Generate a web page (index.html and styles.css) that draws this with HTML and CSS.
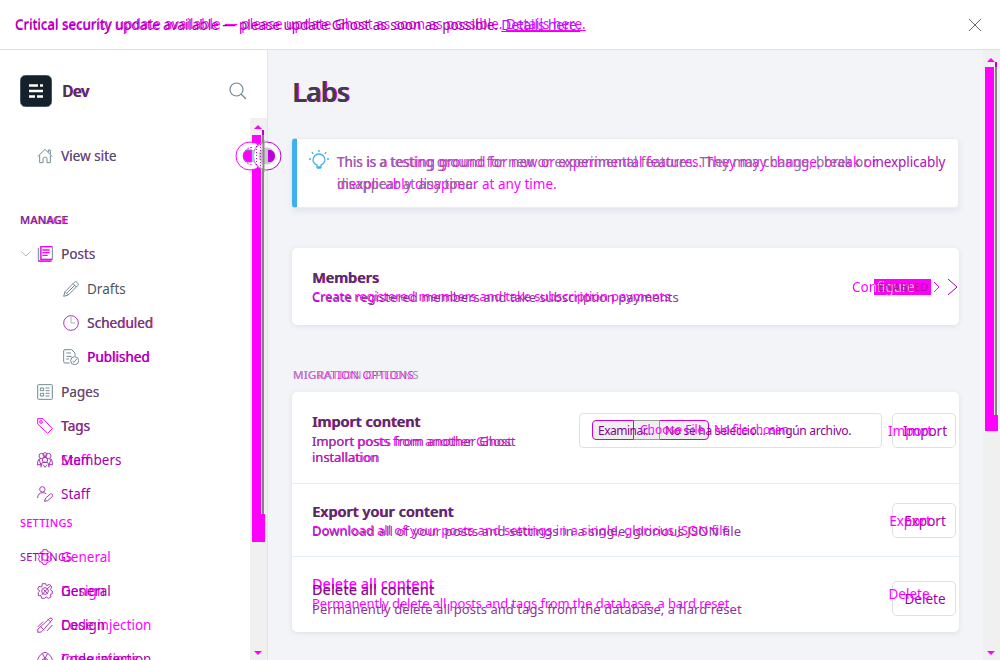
FILE: index.html
```html
<!DOCTYPE html>
<html lang="en">
<head>
<meta charset="utf-8">
<title>Labs</title>
<link rel="stylesheet" href="styles.css">
</head>
<body>
<div class="app">
  <header class="banner">
    <span class="pair banner-text"><span class="now">Critical security update available — please update Ghost as soon as possible. <a>Details here.</a></span><span class="was">Critical security update available — please update Ghost as soon as possible. <a>Details here.</a></span></span>
    <svg class="close" width="14" height="14" viewBox="0 0 14 14"><path d="M1 1l12 12M13 1L1 13"/></svg>
  </header>
  <div class="body">
    <aside class="sidebar">
      <div class="brand">
        <svg width="32" height="32" viewBox="0 0 32 32"><rect width="32" height="32" rx="6" fill="#15212a"/><path d="M9 10.5h9M20 10.5h3M9 16h14M9 21.500h6M17 21.500h6" stroke="#fff" stroke-width="2.500"/></svg>
        <span class="pair brand-name"><span class="now dark">Dev</span><span class="was">Dev</span></span>
        <svg class="search" width="18" height="18" viewBox="0 0 18 18"><circle cx="7.500" cy="7.500" r="6.500"/><path d="M12 12l5 5"/></svg>
      </div>
      <div class="scroller">
        <nav class="nav">
          <div class="item view"><svg class="ic" viewBox="0 0 24 24"><path d="M1 13L12 2l11 11M4 11v11h5v-6q0-2 2-2h2q2 0 2 2v6h5V11M17 6V3h3v6"/></svg><span class="pair"><span class="now grey">View site</span><span class="was faint">View site</span></span></div>
          <div class="head manage"><span class="pair"><span class="now dim">MANAGE</span><span class="was">MANAGE</span></span></div>
          <div class="item posts"><svg class="chev" width="10" height="6" viewBox="0 0 10 6"><path d="M.5.5L5 5 9.500.500"/></svg><svg class="ic" viewBox="0 0 24 24"><path d="M5 1h18v19H5zM2 3v20h19"/><path class="hot" stroke-width="2" d="M5 1h18M5 20h18M2 22.500h20M6 1v19M8 6h11M8 10h11M8 14h8"/></svg><span class="pair"><span class="now grey">Posts</span><span class="was faint">Posts</span></span></div>
          <div class="item sub drafts"><svg class="ic" viewBox="0 0 24 24"><path d="M1 23l2-7L17 2q2-2 4 0l1 1q2 2 0 4L8 21zM3 16l5 5M15 4l5 5M6 18L18 6"/></svg><span class="grey">Drafts</span></div>
          <div class="item sub sch"><svg class="ic warm" viewBox="0 0 24 24"><circle cx="12" cy="12" r="11"/><path d="M12 3v9h6" stroke="#a9b4b9"/></svg><span class="pair"><span class="now grey">Scheduled</span><span class="was tint">Scheduled</span></span></div>
          <div class="item sub pub"><svg class="ic" viewBox="0 0 24 24"><path d="M10 21H3q-2 0-2-2V3q0-2 2-2h10l5 5v4M5 6h7M5 11h8M5 15h4"/><circle cx="17.500" cy="17.500" r="6"/><path d="M14.500 18l2 2 4-5"/></svg><span class="pair"><span class="now">Published</span><span class="was tint">Published</span></span></div>
          <div class="item pages"><svg class="ic" viewBox="0 0 24 24"><rect x="1" y="1" width="22" height="22" rx="1"/><path d="M5 6h5v4H5zM5 14h5v4H5zM13 6h6M13 10h6M13 14h6M13 18h6"/></svg><span class="pair"><span class="now grey">Pages</span><span class="was faint">Pages</span></span></div>
          <div class="item tags"><svg class="ic hot" viewBox="0 0 24 24"><path d="M1 1h8l14 15-7 7L1 9z"/><circle cx="6" cy="6" r="2"/></svg><span class="pair"><span class="now dim">Tags</span><span class="was tint">Tags</span></span></div>
          <div class="item members"><svg class="ic warm" viewBox="0 0 24 24"><circle cx="7" cy="6" r="4"/><circle cx="17" cy="6" r="4"/><circle cx="12" cy="12" r="4"/><circle cx="12" cy="4" r="3"/><path d="M1 20v-5q0-5 5-5M23 20v-5q0-5-5-5M6 23v-3q0-5 6-5t6 5v3M1 19h6M17 19h6M9 19l3 4 3-4M3 11l4 11M21 11l-4 11"/></svg><span class="pair"><span class="now">Members</span><span class="was">Staff</span></span></div>
          <div class="item staff"><svg class="ic warm" viewBox="0 0 24 24"><circle cx="8" cy="5" r="4"/><path d="M1 18q0-8 8-8 3 0 5 2M11 23l2-5 7-6q2-1 3 1t0 3l-7 6z"/></svg><span class="now">Staff</span></div>
          <div class="head set-was"><span class="was">SETTINGS</span></div>
          <div class="head set-now"><span class="now">SETTINGS</span><div class="float-item"><svg class="ic hot" viewBox="0 0 24 24"><path d="M9 1h6l1 3 4 1 2 5-2 2 2 3-3 4-4 1-1 3H9l-1-3-4-1-2-5 2-2-2-4 3-3 4-1z"/><circle cx="12" cy="12" r="5"/></svg><span class="was">General</span></div></div>
          <div class="item general"><svg class="ic warm" viewBox="0 0 24 24"><path d="M8 1h5l1 3 5-2 3 4-2 4 3 2v4l-3 1 1 4-4 2-3-2-3 2H7l-1-4H2v-5l2-2-3-3 2-4 4 1z"/><circle cx="12" cy="12" r="5"/><path d="M7 18L21 3M10 10l5 5"/></svg><span class="pair"><span class="now">General</span><span class="was">Design</span></span></div>
          <div class="item design"><svg class="ic warm" viewBox="0 0 24 24"><path d="M1 23q-1-6 4-8L19 2q4-2 4 2L10 19q-3 5-9 4M5 14l6 6M1 15l8-8M15 21l8-9M16 3l5 5"/></svg><span class="pair"><span class="now">Design</span><span class="was">Code injection</span></span></div>
          <div class="item code"><svg class="ic warm" viewBox="0 0 24 24"><path d="M1 13q3-9 11-11 8 2 11 11v10H1zM8 4l8 14M16 4L8 18M4 16l7-5M20 16l-7-5"/></svg><span class="pair"><span class="now">Code injection</span><span class="was">Integrations</span></span></div>
        </nav>
        <div class="bar side-bar">
          <i class="arrow up"></i><i class="thumb"></i><i class="line"></i><i class="arrow down"></i>
          <svg class="rings" width="50" height="32" viewBox="0 0 50 32"><circle cx="16" cy="16" r="14" fill="#fff" stroke="#f0f"/><path d="M18 10h-5q-4 2-4 6t4 6h5z" fill="#f0f"/><path d="M18 7.500a8.500 8.500 0 0 0 0 17" stroke="#f0f" stroke-dasharray="2 1"/><circle cx="33" cy="16" r="14" fill="#fff" fill-opacity=".8" stroke="#bf00ce"/><path d="M33 2a14 14 0 0 0 0 28" stroke="#bbb"/><path d="M20 11a14 14 0 0 0 0 10" stroke="#8fd0ee" stroke-width="2"/><circle cx="33" cy="16" r="8.500" fill="#c8c8c8" stroke="none"/><path d="M34 10h3q4 2 4 6t-4 6h-3z" fill="#c000dc" stroke="none"/><path d="M29.500 0v32" stroke="#888" stroke-width="2"/><path d="M22.500 6v20M26.500 4v24" stroke="#d0c" stroke-dasharray="1 2"/></svg>
        </div>
      </div>
    </aside>
    <main class="main">
      <h1 class="pair title"><span class="now dark">Labs</span><span class="was">Labs</span></h1>
      <section class="note">
        <svg width="20" height="20" viewBox="0 0 20 20"><path d="M8 17v-2q-4-2-4-5a6 6 0 0 1 12 0q0 3-4 5v2zM10 0v2M3 2l1 2M17 2l-1 2M0 9h2M18 9h2M8 18h4"/></svg>
        <div class="pair note-text"><p class="now slate">This is a testing ground for new or experimental features. They may change, break or <em>inexplicably</em><br>disappear at any time.</p><p class="was">This is a testing ground for new or experimental features. They may change, break or<br>inexplicably disappear at any time.</p></div>
      </section>
      <section class="card members-card">
        <div class="copy"><h2 class="pair"><span class="now dark">Members</span><span class="was">Members</span></h2><p class="pair d1"><span class="now slate">Create registered members and take subscription payments</span><span class="was">Create registered members and take subscription payments</span></p></div>
        <div class="state"><span class="configure">Configure</span><span class="badge"><span>ENABLED</span></span><svg width="27" height="16" viewBox="0 0 27 16"><path d="M3 3l5 5-5 5"/><path class="far" d="M17 0l9 8-9 8"/></svg></div>
      </section>
      <h3 class="pair group"><span class="now">MIGRATION OPTIONS</span><span class="was">MIGRATION OPTIONS</span></h3>
      <section class="card options">
        <div class="row r1">
          <div class="copy"><h2 class="pair h-i"><span class="now dark">Import content</span><span class="was">Import content</span></h2><p class="pair d2"><span class="now slate">Import posts from another Ghost<br>installation</span><span class="was">Import posts from another Ghost<br>installation</span></p></div>
          <div class="file"><span class="pick"><b></b><span class="now">Examinar...</span></span><span class="now nofile">No se ha seleccio... ningún archivo.</span><span class="was choose">Choose File</span><span class="was chosen">No file chosen</span></div>
          <div class="btn b1"><span class="now">Import</span><span class="was">Import</span></div>
        </div>
        <div class="row r2">
          <div class="copy"><h2 class="pair h-e"><span class="now dark">Export your content</span><span class="was">Export your content</span></h2><p class="pair d3"><span class="now slate">Download all of your posts and settings in a single, glorious JSON file</span><span class="was">Download all of your posts and settings in a single, glorious JSON file</span></p></div>
          <div class="btn b2"><span class="now">Export</span><span class="was">Export</span></div>
        </div>
        <div class="row r3">
          <div class="copy"><h2 class="pair h-d"><span class="now dark">Delete all content</span><span class="was">Delete all content</span></h2><p class="pair d4"><span class="now slate">Permanently delete all posts and tags from the database, a hard reset</span><span class="was">Permanently delete all posts and tags from the database, a hard reset</span></p></div>
          <div class="btn b3"><span class="now">Delete</span><span class="was">Delete</span></div>
        </div>
      </section>
    </main>
    <div class="bar main-bar"><i class="arrow up"></i><i class="thumb"></i><i class="line"></i><i class="arrow down"></i></div>
  </div>
</div>
</body>
</html>
```
FILE: styles.css
```css
* { box-sizing: border-box; }
body { margin: 0; font: 13.5px/20px "Noto Sans", "Open Sans", sans-serif; background: #f3f4f8; }
h1, h2, h3, p { margin: 0; font: inherit; }
svg { fill: none; stroke: #738a94; flex: none; display: block; }
.app { height: 660px; display: flex; flex-direction: column; overflow: hidden; }

/* two revisions of a label stacked in one grid cell */
.pair { display: grid; justify-content: start; }
.pair > * { grid-area: 1 / 1; white-space: nowrap; }
.pair > .now { z-index: 1; }
.now { color: #a000aa; }
.was { color: #f0f; }
.grey { color: #4c555c; }
.dim { color: #59485f; }
.dark { color: #394047; font-weight: 600; }
.pair > .faint { opacity: .7; margin-left: .4px; }
.pair > .tint { padding-left: .6px; }

.banner { height: 50px; flex: none; background: #fff; border-bottom: 1px solid #dde1e5; display: flex; align-items: center; justify-content: space-between; padding: 0 18px 0 15px; }
.banner-text .now { letter-spacing: -.03px; margin-top: 1px; }
.banner-text .was { letter-spacing: .03px; }
.banner-text a { text-decoration: underline; }
.banner-text .now a { color: #9a20ff; }
.close { stroke: #555; stroke-width: .9; }

.body { flex: 1; min-height: 0; display: flex; }
.sidebar { width: 268px; flex: none; background: #fff; border-right: 1px solid #e1e4ea; display: flex; flex-direction: column; }
.brand { height: 68px; flex: none; padding: 25px 20px 0 20px; display: flex; gap: 10px; }
.brand-name { flex: 1; font-size: 15.2px; line-height: 32px; letter-spacing: -.5px; font-weight: 600; }
.brand-name .was { margin-left: .8px; }
.search { margin-top: 7px; stroke-width: 1.200; }
.scroller { flex: 1; min-height: 0; display: flex; justify-content: space-between; }
.nav { width: 250px; padding-top: 21px; overflow: hidden; }
.item { height: 34px; display: flex; align-items: center; gap: 8px; padding-left: 37px; position: relative; }
.sub { padding-left: 63px; }
.drafts, .pages { margin-top: 1px; }
.staff { height: 33px; }
.ic { width: 16px; height: 16px; stroke-width: 1.500; }
.hot { stroke: #f0f; }
.warm { stroke: #a83bb4; }
.chev { margin: 0 -2px 0 -16px; stroke: #aeb9be; }
.head { font-size: 11px; line-height: 20px; padding-left: 20px; position: relative; letter-spacing: .2px; }
.manage { margin-top: 37px; height: 27px; }
.manage .was { font-weight: 600; }
.set-was { height: 34px; padding-top: 3px; }
.set-now { height: 30px; padding-top: 3px; }
.set-was span { font-weight: 500; }
.float-item { position: absolute; left: 37px; top: 3px; display: flex; align-items: center; gap: 8px; font-size: 13.5px; letter-spacing: 0; }
.bar { position: relative; background: #f0f0f0; flex: none; }
.bar i { position: absolute; }
.side-bar { width: 17px; }
.arrow { left: 4px; border: 4px solid transparent; }
.up { border-bottom-color: #f0f; border-top: 0; }
.down { border-top-color: #f0f; border-bottom: 0; bottom: 5px; }
.thumb { left: 2px; width: 13px; background: #f0f; }
.line { left: 11px; width: 4px; background: #858585; border-left: 1px solid #eee; border-right: 1px solid #eee; }
.line::before { content: ""; display: block; height: 5px; background: #c000c8; }
.side-bar .up { top: 7px; }
.side-bar .thumb { top: 17px; height: 407px; }
.side-bar .line { top: 12px; height: 384px; }
.rings { position: absolute; left: -16px; top: 22px; }

.main { flex: 1; padding: 22px 24px 0 24px; }
.title { font-size: 27px; line-height: 40px; font-weight: 600; letter-spacing: -1px; }
.title .was { margin-left: 1px; }
.note { margin-top: 26px; height: 70px; width: 667px; background: #fff; border: 1px solid #e9edf2; border-left: 5px solid #3eb0ef; border-radius: 4px; padding: 12px 0 0 12px; display: flex; gap: 8px; line-height: 22px; box-shadow: 0 3px 6px #dfe4eb; }
.note svg { stroke: #3eb0ef; stroke-width: 1.300; margin-top: -1px; }
.note .now { letter-spacing: -.085px; }
.note .was { letter-spacing: .02px; }
.note .slate { color: #8c6a98; }
.note em { font-style: normal; color: #ab10b8; }
.card { background: #fff; border-radius: 5px; width: 667px; box-shadow: 0 1px 5px #dadee5; }
.members-card { margin-top: 40px; height: 77px; padding: 19px 0 0 20px; display: flex; justify-content: space-between; }
.copy h2 { font-size: 14.5px; line-height: 20px; }
.copy h2 .was { font-weight: 600; margin-left: .7px; }
.copy p { font-size: 13px; line-height: 16px; margin-top: 2px; }
.d1 .was { letter-spacing: -.15px; margin-top: -1px; }
.d2 .was { letter-spacing: -.12px; }
.d3 .now { letter-spacing: .14px; }
.d3 .was { letter-spacing: -.02px; margin-top: -1px; }
.d4 .now { letter-spacing: .06px; }
.d4 .was { letter-spacing: -.12px; }
.state { display: flex; align-items: center; height: 40px; position: relative; left: -1px; }
.badge { background: #f0f; color: #a02080; font-size: 11px; letter-spacing: .25px; line-height: 16px; padding: 0 4px; width: 57px; }
.badge span { position: relative; z-index: 2; }
.configure { position: absolute; z-index: 1; left: -22px; color: transparent; background: linear-gradient(90deg, #f0f 22px, #f4c8f0 22px); background-clip: text; -webkit-background-clip: text; }
.state svg { stroke: #f0f; }
.state .far { stroke: #a000aa; }
.group { margin-top: 40px; font-size: 11.5px; line-height: 20px; padding-left: 1px; }
.group .now { color: #a98fb2; letter-spacing: .5px; }
.group .was { letter-spacing: .2px; }
.options { margin-top: 7px; height: 240px; }
.row { display: flex; padding-left: 20px; padding-right: 3px; }
.row + .row { border-top: 1px solid #e5edf4; }
.row .copy { flex: 1; margin-top: -1px; }
.r1 { height: 91px; padding-top: 20px; }
.r2 { height: 73px; padding-top: 18px; }
.r3 { height: 76px; padding-top: 17px; }
.r3 .now { transform: translateY(6px); }
.copy .pair .now { color: #8d3599; }
.copy h2.pair .now { color: #44394f; }
.r3 h2.pair .now { color: #850c90; font-weight: 500; }
.r3 h2.pair .was { margin: 0; font-weight: 500; }
.file { width: 303px; height: 35px; border: 1px solid #dde1e5; border-radius: 4px; margin: 1px 10px 0 0; padding: 6px 12px; display: flex; position: relative; font-size: 12px; }
.pick { width: 117px; height: 20px; background: #efefef; border: 1px solid #d000d8; border-radius: 4px; padding-left: 5px; line-height: 19px; position: relative; }
.pick b { position: absolute; left: 40px; top: -1px; width: 27px; height: 20px; border: 1px solid #999; border-left-color: #e000e8; }
.pick .now { position: relative; letter-spacing: -.5px; }
.file .now { color: #880092; }
.nofile { position: absolute; left: 85px; top: 7px; white-space: nowrap; letter-spacing: -.3px; }
.choose { position: absolute; left: 60px; top: 6px; }
.chosen { position: absolute; left: 134px; top: 6px; letter-spacing: -.4px; }
.btn { width: 64px; height: 35px; border: 1px solid #dde1e5; border-radius: 5px; display: grid; place-items: center; margin-top: 1px; position: relative; }
.btn > * { grid-area: 1 / 1; }
.btn .now { transform: translateX(1px); }
.btn .was { transform: translateX(-14px); }
.r3 .btn { margin-top: 7px; }
.r3 .btn .now { transform: translateX(1px); }
.r3 .btn .was { transform: translate(-15px, -5px); }
.main-bar { width: 17px; }
.main-bar .up { top: 8px; }
.main-bar .thumb { top: 17px; height: 364px; }
.main-bar .line { top: 12px; height: 353px; }
```
